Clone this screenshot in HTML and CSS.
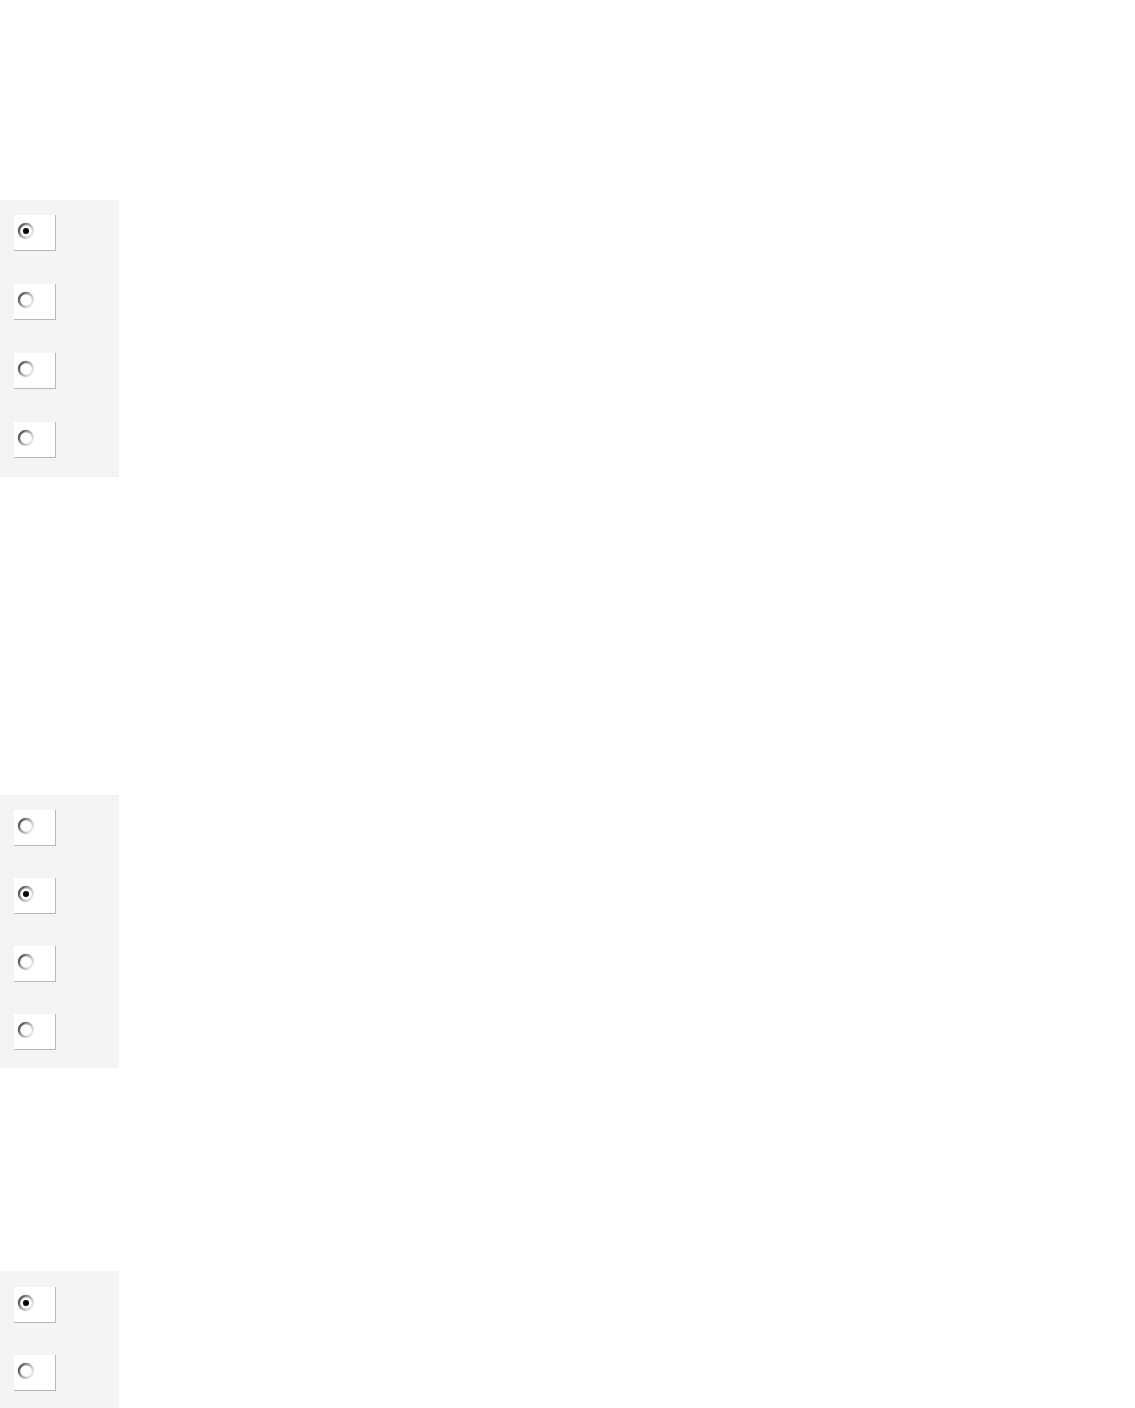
FILE: index.html
```html
<!DOCTYPE html>
<html>
<head>
<meta charset="utf-8">
<link rel="stylesheet" href="styles.css">
</head>
<body>
<svg width="0" height="0" class="defs">
  <defs>
    <linearGradient id="ring" x1="0" y1="0.2" x2="1" y2="0.8">
      <stop offset="0" stop-color="#4a4a4a"/>
      <stop offset="0.4" stop-color="#a0a0a0"/>
      <stop offset="1" stop-color="#f2f2f2"/>
    </linearGradient>
    <filter id="soft" x="-20%" y="-20%" width="140%" height="140%">
      <feGaussianBlur stdDeviation="0.45"/>
    </filter>
  </defs>
</svg>
<main class="page">
  <section class="panel panel-a">
    <label class="opt"><svg class="radio" viewBox="0 0 18 18"><g filter="url(#soft)"><circle cx="9" cy="9" r="7" fill="#fff" stroke="url(#ring)" stroke-width="2.4"/><circle cx="9" cy="9" r="3" fill="#000"/></g></svg></label>
    <label class="opt"><svg class="radio" viewBox="0 0 18 18"><g filter="url(#soft)"><circle cx="9" cy="9" r="7" fill="#fff" stroke="url(#ring)" stroke-width="2.4"/></g></svg></label>
    <label class="opt"><svg class="radio" viewBox="0 0 18 18"><g filter="url(#soft)"><circle cx="9" cy="9" r="7" fill="#fff" stroke="url(#ring)" stroke-width="2.4"/></g></svg></label>
    <label class="opt"><svg class="radio" viewBox="0 0 18 18"><g filter="url(#soft)"><circle cx="9" cy="9" r="7" fill="#fff" stroke="url(#ring)" stroke-width="2.4"/></g></svg></label>
  </section>
  <section class="panel panel-b">
    <label class="opt"><svg class="radio" viewBox="0 0 18 18"><g filter="url(#soft)"><circle cx="9" cy="9" r="7" fill="#fff" stroke="url(#ring)" stroke-width="2.4"/></g></svg></label>
    <label class="opt"><svg class="radio" viewBox="0 0 18 18"><g filter="url(#soft)"><circle cx="9" cy="9" r="7" fill="#fff" stroke="url(#ring)" stroke-width="2.4"/><circle cx="9" cy="9" r="3" fill="#000"/></g></svg></label>
    <label class="opt"><svg class="radio" viewBox="0 0 18 18"><g filter="url(#soft)"><circle cx="9" cy="9" r="7" fill="#fff" stroke="url(#ring)" stroke-width="2.4"/></g></svg></label>
    <label class="opt"><svg class="radio" viewBox="0 0 18 18"><g filter="url(#soft)"><circle cx="9" cy="9" r="7" fill="#fff" stroke="url(#ring)" stroke-width="2.4"/></g></svg></label>
  </section>
  <section class="panel panel-c">
    <label class="opt"><svg class="radio" viewBox="0 0 18 18"><g filter="url(#soft)"><circle cx="9" cy="9" r="7" fill="#fff" stroke="url(#ring)" stroke-width="2.4"/><circle cx="9" cy="9" r="3" fill="#000"/></g></svg></label>
    <label class="opt"><svg class="radio" viewBox="0 0 18 18"><g filter="url(#soft)"><circle cx="9" cy="9" r="7" fill="#fff" stroke="url(#ring)" stroke-width="2.4"/></g></svg></label>
  </section>
</main>
</body>
</html>
```
FILE: styles.css
```css
html, body {
  margin: 0;
  padding: 0;
  background: #ffffff;
  font-family: "Liberation Sans", Arial, sans-serif;
}
.defs {
  position: absolute;
  width: 0;
  height: 0;
}
.page {
  display: flex;
  flex-direction: column;
  padding-top: 200px;
}
.panel {
  width: 119px;
  background: #f4f4f4;
  display: flex;
  flex-direction: column;
  box-sizing: border-box;
  padding: 15px 0 19px 14px;
  gap: 33px;
}
.panel-b {
  margin-top: 318px;
  gap: 32px;
  padding-bottom: 18px;
}
.panel-c {
  margin-top: 203px;
  padding-top: 16px;
  gap: 32px;
}
.opt {
  display: block;
  box-sizing: border-box;
  width: 42px;
  height: 36px;
  background: #ffffff;
  border-right: 1px solid #b8b8b8;
  border-bottom: 1px solid #b8b8b8;
  padding: 7px 0 0 3px;
}
.radio {
  display: block;
  width: 18px;
  height: 18px;
}
```
